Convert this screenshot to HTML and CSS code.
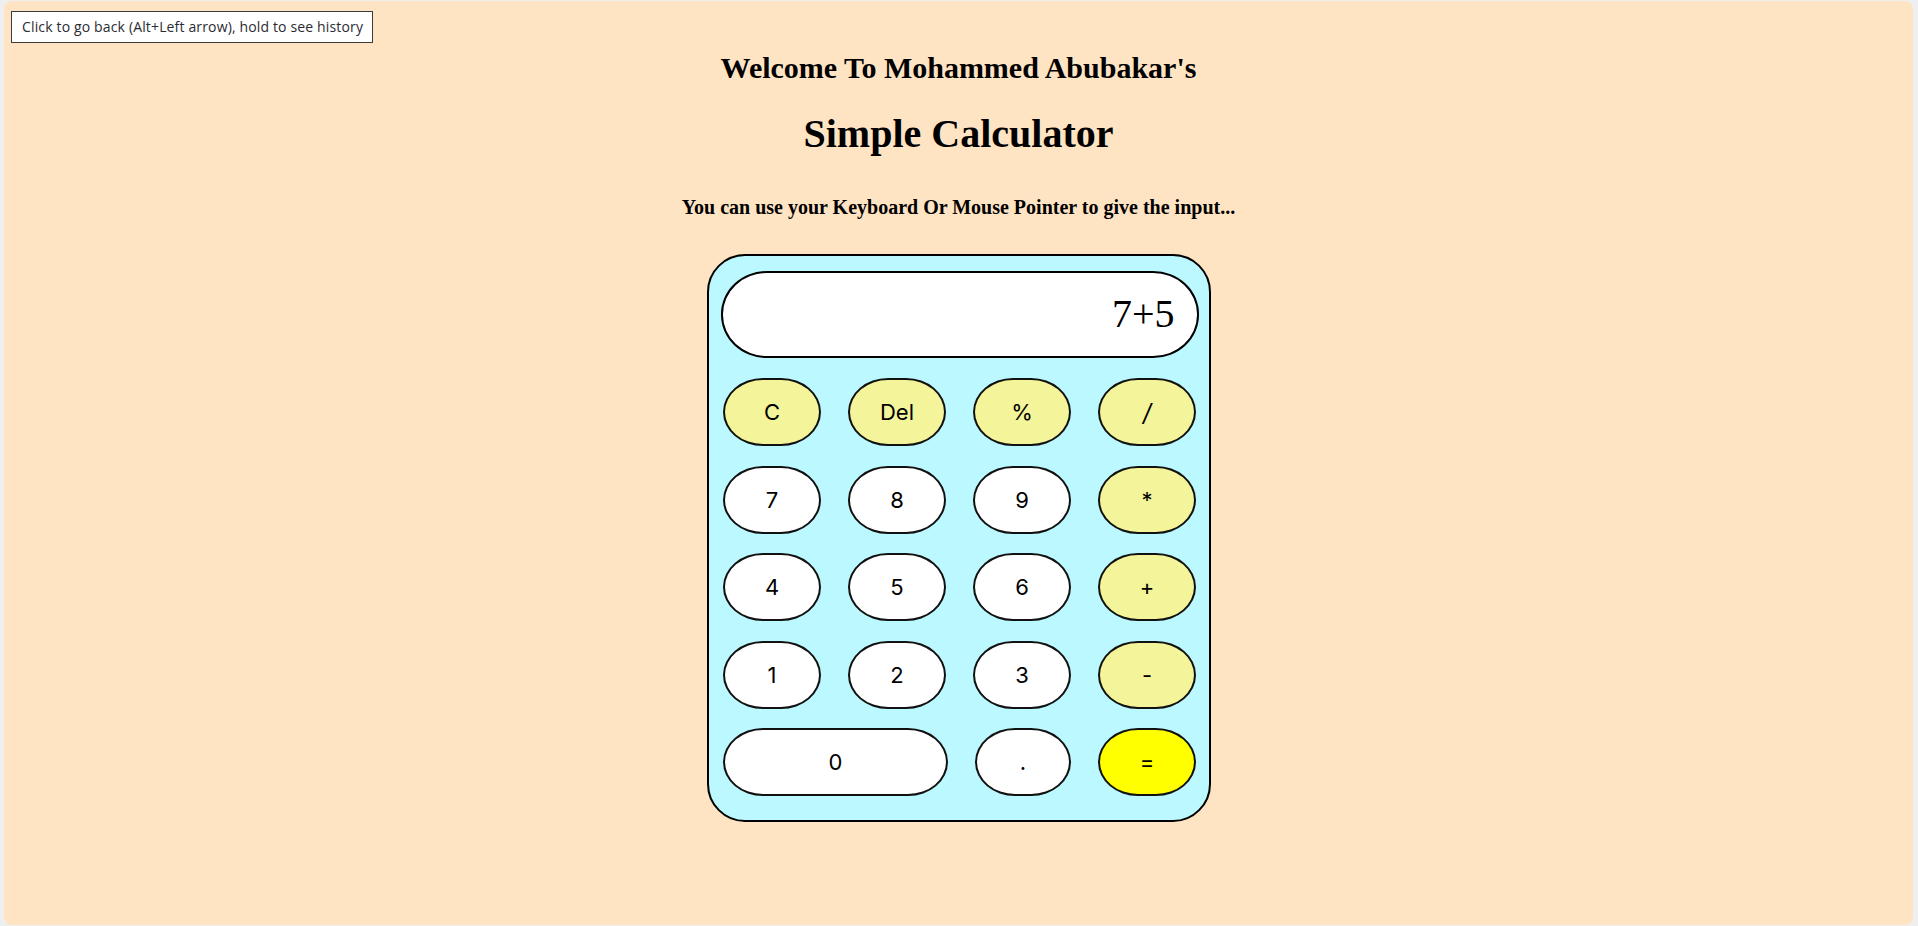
FILE: index.html
```html
<!DOCTYPE html>
<html lang="en">
<head>
<meta charset="utf-8">
<title>Simple Calculator</title>
<link rel="stylesheet" href="styles.css">
</head>
<body>
<div class="tooltip">Click to go back (Alt+Left arrow), hold to see history</div>
<main class="page">
  <h2 class="welcome">Welcome To Mohammed Abubakar's</h2>
  <h1 class="title">Simple Calculator</h1>
  <p class="hint">You can use your Keyboard Or Mouse Pointer to give the input...</p>
  <div class="calc">
    <div class="display">7+5</div>
    <div class="keys">
      <button class="key op">C</button>
      <button class="key op">Del</button>
      <button class="key op">%</button>
      <button class="key op slash">/</button>
      <button class="key">7</button>
      <button class="key">8</button>
      <button class="key">9</button>
      <button class="key op">*</button>
      <button class="key">4</button>
      <button class="key">5</button>
      <button class="key">6</button>
      <button class="key op">+</button>
      <button class="key">1</button>
      <button class="key">2</button>
      <button class="key">3</button>
      <button class="key op">-</button>
      <button class="key zero">0</button>
      <button class="key dot">.</button>
      <button class="key equals">=</button>
    </div>
  </div>
</main>
</body>
</html>
```

FILE: styles.css
```css
html {
  background: #efefef;
  margin: 0;
  padding: 0;
}

body {
  margin: 1px 5px 1px 4px;
  height: 924px;
  background: #ffe4c4;
  border-radius: 8px;
  position: relative;
  font-family: "Liberation Serif", "Times New Roman", serif;
  color: #000;
  overflow: hidden;
}

.tooltip {
  position: absolute;
  left: 7px;
  top: 10px;
  padding: 7px 9px 7px 10px;
  border: 1px solid #3a3a3a;
  background: #fff;
  color: #2b2b33;
  font-family: "Open Sans", "Noto Sans", sans-serif;
  font-size: 14px;
  letter-spacing: 0.15px;
  line-height: 16px;
  white-space: nowrap;
}

.page {
  display: flex;
  flex-direction: column;
  align-items: center;
  padding-top: 49px;
}

.welcome {
  margin: 0;
  font-size: 30px;
  line-height: 36px;
  font-weight: bold;
}

.title {
  margin: 25px 0 0;
  font-size: 40px;
  line-height: 46px;
  font-weight: bold;
}

.hint {
  margin: 39px 0 0;
  font-size: 20px;
  line-height: 23px;
  font-weight: bold;
}

.calc {
  margin-top: 35px;
  width: 478px;
  padding: 15px 10px 24px 12px;
  border: 2px solid #000;
  border-radius: 38px;
  background: #bbf8ff;
}

.display {
  box-sizing: border-box;
  height: 87px;
  border: 2px solid #000;
  border-radius: 46px / 43px;
  background: #fff;
  display: flex;
  align-items: center;
  justify-content: flex-end;
  padding: 0 22px 2px 0;
  font-family: "Liberation Serif", "Times New Roman", serif;
  font-size: 40px;
}

.keys {
  margin-top: 20px;
  display: grid;
  grid-template-columns: repeat(4, 98px);
  grid-auto-rows: 68px;
  column-gap: 27px;
  row-gap: 19.5px;
  justify-content: center;
}

.key {
  box-sizing: border-box;
  margin: 0;
  padding: 0;
  border: 2px solid #111;
  border-radius: 40px / 34px;
  background: #fff;
  color: #000;
  font-family: "Inter", "Noto Sans", sans-serif;
  font-size: 22px;
  font-weight: 400;
  cursor: pointer;
}

.op {
  background: #f4f59a;
}

.slash {
  font-style: italic;
  font-size: 24px;
}

.zero {
  grid-column: span 2;
  width: 225px;
}

.dot {
  margin-left: 2px;
}

.equals {
  background: #ffff00;
}
```
